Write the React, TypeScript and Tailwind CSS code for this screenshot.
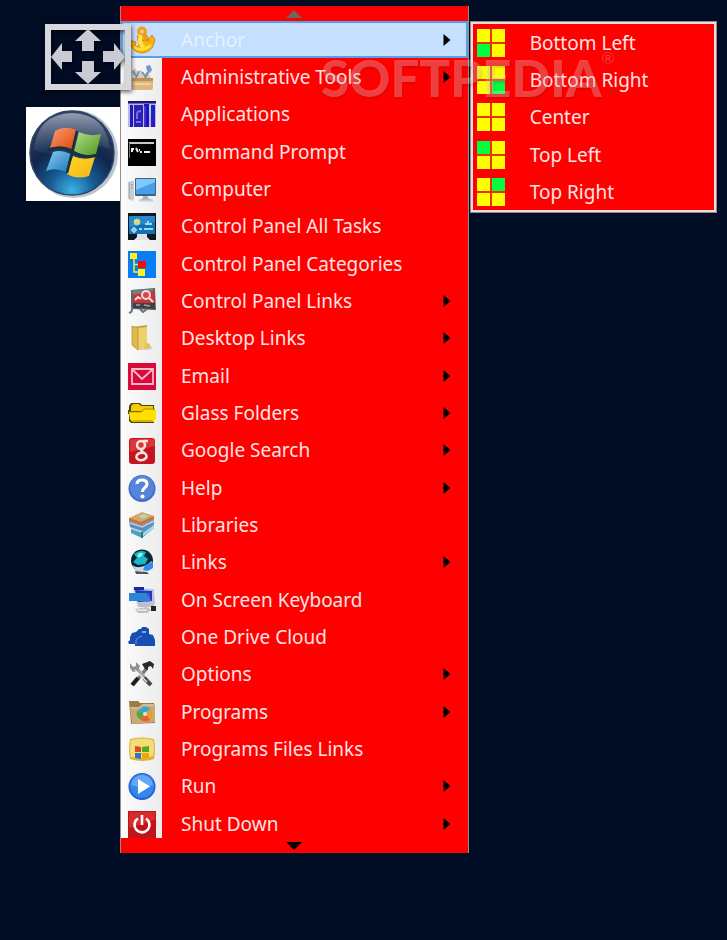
import React from "react";

const svgProps = {
  viewBox: "0 0 28 28",
  className: "h-7 w-7 shrink-0",
  "aria-hidden": true,
};

/* ── ICONS ─────────────────────────────────── */
const AnchorIcon = () => (
  <svg {...svgProps}>
    <path d="M10 13L18 12Q20 18 21 15L20 13L24 9L27 14L26 17Q24 26 14 27Q5 26 3 19L1 19V14L8 16L7 19Q9 22 11 20Z" fill="#fbb40a" stroke="#e08612" />
    <circle cx="14" cy="5.500" r="3.500" fill="#f6c9a0" stroke="#f0a018" strokeWidth="3" />
    <path d="M9 10L19 9L20 14L10 15Z" fill="#ff9d12" stroke="#cf7412" strokeWidth=".6" />
    <path d="M13 9Q10 17 16 22" stroke="#ffe44a" strokeWidth="4" fill="none" />
    <path d="M6 21Q14 27 23 19" stroke="#ffe03a" strokeWidth="2.500" fill="none" />
  </svg>
);

const AdminIcon = () => (
  <svg {...svgProps}>
    <path d="M3 9L7 5L10 9L13 7L17 11L20 8L23 15H5Z" fill="#c8cdd0" />
    <path d="M5 8L9 14M11 8L8 15M14 9L18 14" stroke="#7c858b" strokeWidth="1.500" />
    <path d="M18 3L22 2L24 7L22 10L19 8Z" fill="#6c9ad0" />
    <path d="M20 9L17 15" stroke="#7a8ca0" strokeWidth="2" />
    <path d="M4 15H25V25Q25 27 23 27H4Z" fill="#dfb67e" />
    <path d="M4 15H25V18H4Z" fill="#c08d54" />
    <path d="M6 21H23" stroke="#f0d1a0" strokeWidth="2" />
  </svg>
);

const ApplicationsIcon = () => (
  <svg {...svgProps}>
    <rect y="1" width="28" height="26" fill="#b8b8ee" />
    <rect y="1" width="28" height="2.500" fill="#1a1478" />
    <rect x="2" y="5" width="3" height="22" fill="#2418b8" />
    <rect x="6" y="5" width="9" height="22" fill="#2b22b4" />
    <rect x="16" y="4" width="5" height="23" fill="#2410c0" />
    <rect x="23" y="5" width="4" height="22" fill="#291cc0" />
    <path d="M9 19V14Q9 11 13 11M8 22H13" stroke="#7270e0" strokeWidth="2" fill="none" />
    <path d="M22 4V17" stroke="#8ae0d8" strokeWidth="2" />
    <path d="M17 6V26" stroke="#6354dc" />
  </svg>
);

const PromptIcon = () => (
  <svg {...svgProps}>
    <rect y="1" width="28" height="27" fill="#000" />
    <path d="M1 5H26" stroke="#c8c8c8" strokeWidth="2" />
    <path d="M1.500 5V20" stroke="#777" />
    <path d="M4 14V11H6M8 10L10 14M11 12H12M12 14H14M16 14H22" stroke="#eee" strokeWidth="2" fill="none" />
  </svg>
);

const ComputerIcon = () => (
  <svg {...svgProps}>
    <path d="M1 7L6 5V24L4 26L1 24Z" fill="#c9cdd0" />
    <path d="M1 7V24M3 10H5M3 13H5" stroke="#8d9499" fill="none" />
    <rect x="7" y="3" width="21" height="18" rx="1" fill="#3b6382" />
    <path d="M8 4H27V19H8Z" fill="#46a0e8" />
    <path d="M8 4H27V7L8 15Z" fill="#80c8fa" />
    <path d="M15 21H20V23L24 25H12L15 23Z" fill="#a8b2b8" />
    <path d="M11 25.500H25" stroke="#c8ced2" strokeWidth="2" />
  </svg>
);

const AllTasksIcon = () => (
  <svg {...svgProps}>
    <rect y="1" width="28" height="27" fill="#10181f" />
    <rect x="1" y="4" width="26" height="18" fill="#1270b8" />
    <path d="M1 4H27V10L1 15Z" fill="#2688cc" />
    <circle cx="9" cy="10" r="3" fill="#e9d47a" stroke="#b8d8b8" />
    <path d="M17 12H24M20 9V11M16 17H25M4 18L6 16L8 18L6 20ZM11 17H14" stroke="#9ed8f2" strokeWidth="2" fill="none" />
    <path d="M9 22H19V25L22 28H6L9 25Z" fill="#dfe3e5" />
  </svg>
);

const CategoriesIcon = () => (
  <svg {...svgProps}>
    <rect y="1" width="28" height="27" fill="#0a7df5" />
    <path d="M6 8V22H12M6 14.500H12" stroke="#f4f024" strokeWidth="1.500" fill="none" />
    <rect x="2" y="3" width="7" height="6" fill="#fff21a" />
    <rect x="10" y="11" width="8" height="7" fill="#e81010" />
    <rect x="10" y="19" width="7" height="7" fill="#fff21a" />
  </svg>
);

const PanelLinksIcon = () => (
  <svg {...svgProps}>
    <path d="M3 3L27 1L28 23L3 22Z" fill="#5d656b" />
    <path d="M5 7L26 4L27 16L5 16Z" fill="#d0303a" />
    <path d="M4 3L25 2V4L5 8Z" fill="#777c80" />
    <circle cx="18" cy="8" r="4" fill="#d84850" stroke="#f3dede" strokeWidth="2" />
    <path d="M7 13L10 10L13 12M21 11L25 15" stroke="#f4dcdc" strokeWidth="2" fill="none" />
    <path d="M5 16H27V22L5 21Z" fill="#3e4246" />
    <path d="M8 18H12M16 18L22 19" stroke="#9ea4a8" strokeWidth="1.500" />
    <path d="M4 20Q5 25 1 26M12 22L15 25L19 22" stroke="#6b7278" strokeWidth="2" fill="none" />
  </svg>
);

const FolderIcon = () => (
  <svg {...svgProps}>
    <path d="M17 20L25 23L22 26L9 26Z" fill="#b6c2c8" opacity=".6" />
    <path d="M5 3L19 1V23L10 26Z" fill="#c99f38" />
    <path d="M10 4L19 3V21L17 25L10 26Z" fill="#ecd06c" />
    <path d="M4 2L10 4V26L4 21Z" fill="#dfb94e" stroke="#b88c2c" strokeWidth=".7" />
    <path d="M17 18L22 20V24L16 25Z" fill="#e3c45c" />
  </svg>
);

const EmailIcon = () => (
  <svg {...svgProps}>
    <rect y="1" width="28" height="27" fill="#d80a3c" />
    <path d="M4 7H25V22H4ZM4 7L14 17L25 7" fill="none" stroke="#fbb8c6" strokeWidth="1.800" />
  </svg>
);

const GlassFoldersIcon = () => (
  <svg {...svgProps}>
    <path d="M1 7L3 4H12L14 6H26V24H3L1 22V15H0V11H1Z" fill="#4d4408" />
    <path d="M3 7L5 5H11L13 7H25V12H3Z" fill="#f3cb00" />
    <path d="M1 13H14L16 11H28V20L26 23H4L2 20Z" fill="#ffe100" />
    <path d="M1 13H13L16 10H27" stroke="#b89600" fill="none" />
    <path d="M4 22H25" stroke="#d9ae00" strokeWidth="2" />
  </svg>
);

const GoogleIcon = () => (
  <svg {...svgProps}>
    <rect x="1" y="2" width="26" height="26" rx="3" fill="#c51620" />
    <path d="M2 16L27 10V5Q27 3 24 3H4Q2 3 2 5Z" fill="#dc3438" />
    <ellipse cx="13" cy="9" rx="4" ry="4" stroke="#f8e4e4" strokeWidth="2.500" fill="none" />
    <path d="M15 5L20 5M14 13Q12 14 15 16Q20 19 18 22Q15 25 11 24Q7 22 9 19Q11 16 16 17" stroke="#f8e4e4" strokeWidth="2.500" fill="none" />
  </svg>
);

const HelpIcon = () => (
  <svg {...svgProps}>
    <circle cx="14" cy="14.500" r="13.500" fill="#3e6fc8" />
    <circle cx="14" cy="13.500" r="12" fill="#5585da" />
    <path d="M9 10Q9 6 14 6Q19 6 19 10Q19 12 16.500 14Q14.500 15.500 14.500 18" stroke="#fff" strokeWidth="3" fill="none" />
    <circle cx="14.500" cy="22.500" r="2" fill="#fff" />
  </svg>
);

const LibrariesIcon = () => (
  <svg {...svgProps}>
    <path d="M3 15L14 19L26 11V17L14 27L3 22Z" fill="#4f9fc8" />
    <path d="M3 15L14 19V22L3 18ZM14 23L26 14V17L14 26Z" fill="#a8dce8" />
    <path d="M1 10L14 14L26 8V12L14 20L2 16Z" fill="#6b86b4" />
    <path d="M2 12L14 16L26 10" stroke="#b8cfe5" strokeWidth="1.500" fill="none" />
    <path d="M1 7L14 1L26 5L25 9L13 14L1 10Z" fill="#dda065" />
    <path d="M1 7L13 11L26 5V8L14 14L1 10Z" fill="#b87840" />
    <path d="M10 5L16 3L21 5L15 8Z" fill="#a5dcb8" />
    <path d="M14 21V27" stroke="#347d64" strokeWidth="2" />
  </svg>
);

const LinksIcon = () => (
  <svg {...svgProps}>
    <path d="M7 23L19 24L21 26H8Z" fill="#555" />
    <circle cx="14" cy="12.500" r="11" fill="#0b2735" />
    <path d="M6 6Q12 1 18 4L16 8L20 11L17 16L10 17L5 14L9 10Z" fill="#16b9c4" />
    <path d="M11 5L15 5L13 9L9 9Z" fill="#9cf1ee" />
    <path d="M4 17Q12 23 24 13Q24 20 18 23Q9 26 4 17Z" fill="#cddbe8" />
    <path d="M17 17L25 14V20L20 23L15 22Z" fill="#2d8cf0" />
  </svg>
);

const KeyboardIcon = () => (
  <svg {...svgProps}>
    <path d="M5 2L26 3L27 18L9 18Z" fill="#b9c5e0" />
    <path d="M7 4L24 5V15L10 16Z" fill="#2437bf" />
    <path d="M6 1H16V4H6Z" fill="#1a2c9c" />
    <rect x="1" y="7" width="18" height="8" fill="#2d86d2" />
    <path d="M20 6L23 15L18 16Z" fill="#516fe0" />
    <path d="M9 17L26 18V21H10ZM7 23L19 21L23 24L19 27H10Z" fill="#bcc0c5" />
    <path d="M23 20H28V25H23Z" fill="#262626" />
    <path d="M9 24H19" stroke="#ececec" strokeWidth="1.500" />
  </svg>
);

const CloudIcon = () => (
  <svg {...svgProps}>
    <path d="M0 19L2 17V14L4 10L8 9L11 6H13L14 4H18L21 6V11L25 12L27 17V23H7V21H1Z" fill="#164eb4" />
    <path d="M8 21L8 17L11 14L14 13" stroke="#6f94d4" fill="none" />
    <path d="M14 9H18" stroke="#a9c0e8" strokeWidth="1.500" />
  </svg>
);

const OptionsIcon = () => (
  <svg {...svgProps}>
    <path d="M5 25L19 8" stroke="#777" strokeWidth="3.500" />
    <path d="M4 25L10 18" stroke="#1e1e1e" strokeWidth="4" />
    <path d="M14 4L22 1L26 4L25 9L23 6L20 7L20 10L17 9Z" fill="#282828" />
    <path d="M7 7L22 24" stroke="#a6a6a6" strokeWidth="4" />
    <path d="M16 18L23 25" stroke="#4a4a4a" strokeWidth="4" />
    <path d="M2 3L5 7L8 6L8 2L12 6L10 11L5 12L2 8Z" fill="#909090" />
    <path d="M7 10L19 22" stroke="#eee" strokeWidth="1.300" />
  </svg>
);

const ProgramsIcon = () => (
  <svg {...svgProps}>
    <path d="M1 3H10L12 5H26L27 25L3 26Z" fill="#9b7b4a" />
    <path d="M2 9L11 9L14 6H27V24L4 26Z" fill="#c9aa76" />
    <path d="M3 10H12L15 7H26" stroke="#e4cda2" fill="none" />
    <path d="M10 13Q16 5 23 11L17 15Z" fill="#35a5dc" />
    <path d="M23 11Q26 17 22 22L17 15Z" fill="#e9a020" />
    <path d="M9 13L17 15L13 22Q7 19 9 13Z" fill="#51a84a" />
    <path d="M17 15L22 22Q17 25 13 22Z" fill="#e9602c" />
    <circle cx="17" cy="16" r="2" fill="#e3e9d8" />
  </svg>
);

const ProgramFilesIcon = () => (
  <svg {...svgProps}>
    <path d="M2 4Q14 1 26 4Q28 14 26 24Q14 28 2 24Q0 14 2 4Z" fill="#d9b43a" />
    <path d="M3 5Q14 2 25 5Q27 13 25 21Q14 25 3 22Q1 14 3 5Z" fill="#f5dc74" />
    <path d="M7 11L13 12V17H7Z" fill="#df4822" />
    <path d="M14 12L21 11V17H14Z" fill="#4aac20" />
    <path d="M7 18H13V24L7 23Z" fill="#2777cf" />
    <path d="M14 18H21V23L14 24Z" fill="#f5a800" />
  </svg>
);

const RunIcon = () => (
  <svg {...svgProps}>
    <circle cx="14" cy="14.500" r="13.500" fill="#1f60d0" />
    <circle cx="14" cy="14" r="12" fill="#3388ee" />
    <path d="M3 13Q5 3 14 3Q23 3 25 13Q14 17 3 13Z" fill="#62a8f6" />
    <path d="M10 7L22 14.500L10 22Z" fill="#fff" />
  </svg>
);

const PowerIcon = () => (
  <svg {...svgProps}>
    <rect x="0" y="1" width="28" height="27" fill="#c11418" />
    <path d="M1 2H27V10L1 18Z" fill="#d52b2d" />
    <path d="M10 8.500A7.500 7.500 0 1 0 18 8.500M14 5V15" stroke="#fff" strokeWidth="2.600" fill="none" />
  </svg>
);

/* four squares, the green one marks the screen corner */
const CornerIcon = ({ active }: { active: number }) => (
  <svg {...svgProps}>
    <rect width="28" height="28" fill="#f03000" />
    {[0, 1, 2, 3].map((i) => (
      <rect
        key={i}
        x={i % 2 ? 15 : 0}
        y={i > 1 ? 15 : 0}
        width="13"
        height="13"
        fill={i === active ? "#00ff40" : "#ffff00"}
      />
    ))}
  </svg>
);

const Orb = () => (
  <svg viewBox="0 0 94 94" className="block w-full bg-white" aria-hidden="true">
    <defs>
      <radialGradient id="orb" cx="50%" cy="95%" r="90%">
        <stop offset="0" stopColor="#3cb4e8" />
        <stop offset=".3" stopColor="#175a94" />
        <stop offset=".6" stopColor="#10264c" />
        <stop offset="1" stopColor="#39435f" />
      </radialGradient>
      <linearGradient id="gloss" x1="0" y1="0" x2="0" y2="1">
        <stop offset="0" stopColor="#c6cddb" stopOpacity=".65" />
        <stop offset="1" stopColor="#6680a8" stopOpacity=".1" />
      </linearGradient>
      <linearGradient id="flagRed" x1="0" y1="0" x2="1" y2="1">
        <stop offset="0" stopColor="#f5a070" />
        <stop offset="1" stopColor="#e4440c" />
      </linearGradient>
      <linearGradient id="flagGreen" x1="0" y1="0" x2="1" y2="1">
        <stop offset="0" stopColor="#b5dc8e" />
        <stop offset="1" stopColor="#4c9a1a" />
      </linearGradient>
      <linearGradient id="flagBlue" x1="0" y1="0" x2="1" y2="1">
        <stop offset="0" stopColor="#8ccdf0" />
        <stop offset="1" stopColor="#1878bd" />
      </linearGradient>
      <linearGradient id="flagYellow" x1="0" y1="0" x2="1" y2="1">
        <stop offset="0" stopColor="#ffd820" />
        <stop offset="1" stopColor="#f4b51c" />
      </linearGradient>
    </defs>
    <circle cx="48" cy="47" r="44" fill="#8498ac" opacity=".55" />
    <circle cx="46" cy="46" r="42" fill="url(#orb)" stroke="#2d4566" strokeWidth="1.500" />
    <path d="M8 42Q12 7 46 6Q80 7 84 42Q65 34 46 43Q27 52 8 42Z" fill="url(#gloss)" />
    <path d="M29 24Q39 18 50 23L46 42Q36 37 24 41Z" fill="url(#flagRed)" />
    <path d="M53 25Q63 30 75 27L70 47Q59 50 48 44Z" fill="url(#flagGreen)" />
    <path d="M27 45Q34 42 45 47L40 65Q30 60 20 64Z" fill="url(#flagBlue)" />
    <path d="M47 49Q58 54 69 50L63 69Q51 73 41 67Z" fill="url(#flagYellow)" />
    <path d="M22 43Q35 38 47 45Q59 52 71 48M51 24L41 66" stroke="#1b3037" strokeWidth="2.500" fill="none" />
  </svg>
);

const MoveHandle = () => (
  <svg viewBox="0 0 88 68" className="h-[68px] w-[88px] drop-shadow-[1px_2px_2px_rgba(0,0,0,0.6)]" aria-hidden="true">
    <rect x="3" y="3" width="80" height="60" fill="none" stroke="#d6d6dd" strokeWidth="6" />
    <g fill="#cacad2">
      <path d="M43 5L56 17H49V27H37V17H30Z" />
      <path d="M43 60L30 48H37V37H49V48H56Z" />
      <path d="M6 33L17 19V27H27V38H17V46Z" />
      <path d="M80 33L69 46V38H58V27H69V19Z" />
    </g>
  </svg>
);

const Arrow = () => (
  <svg viewBox="0 0 7 12" className="h-3 w-2 shrink-0 text-black" aria-hidden="true">
    <path d="M0 0L7 6L0 12Z" fill="currentColor" />
  </svg>
);

type Item = { label: string; icon: React.ReactNode; sub?: boolean };

const items: Item[] = [
  { label: "Anchor", icon: <AnchorIcon />, sub: true },
  { label: "Administrative Tools", icon: <AdminIcon />, sub: true },
  { label: "Applications", icon: <ApplicationsIcon /> },
  { label: "Command Prompt", icon: <PromptIcon /> },
  { label: "Computer", icon: <ComputerIcon /> },
  { label: "Control Panel All Tasks", icon: <AllTasksIcon /> },
  { label: "Control Panel Categories", icon: <CategoriesIcon /> },
  { label: "Control Panel Links", icon: <PanelLinksIcon />, sub: true },
  { label: "Desktop Links", icon: <FolderIcon />, sub: true },
  { label: "Email", icon: <EmailIcon />, sub: true },
  { label: "Glass Folders", icon: <GlassFoldersIcon />, sub: true },
  { label: "Google Search", icon: <GoogleIcon />, sub: true },
  { label: "Help", icon: <HelpIcon />, sub: true },
  { label: "Libraries", icon: <LibrariesIcon /> },
  { label: "Links", icon: <LinksIcon />, sub: true },
  { label: "On Screen Keyboard", icon: <KeyboardIcon /> },
  { label: "One Drive Cloud", icon: <CloudIcon /> },
  { label: "Options", icon: <OptionsIcon />, sub: true },
  { label: "Programs", icon: <ProgramsIcon />, sub: true },
  { label: "Programs Files Links", icon: <ProgramFilesIcon /> },
  { label: "Run", icon: <RunIcon />, sub: true },
  { label: "Shut Down", icon: <PowerIcon />, sub: true },
];

const corners = [
  { label: "Bottom Left", active: 2 },
  { label: "Bottom Right", active: 3 },
  { label: "Center", active: -1 },
  { label: "Top Left", active: 0 },
  { label: "Top Right", active: 1 },
];

const App: React.FC = () => {
  return (
    <main className="relative flex min-h-screen items-start bg-[#000c24] pt-[6px] pr-[10px] pb-20 pl-[26px] font-['Noto_Sans','Open_Sans',sans-serif] text-[19px] text-[#ffe4e4]">
      {/* ── START ORB ─────────────────────────────── */}
      <button aria-label="Start" className="mt-[101px] w-[94px] shrink-0">
        <Orb />
      </button>

      {/* ── MAIN MENU ─────────────────────────────── */}
      <nav className="flex-[349] border-x border-[#9a8c8c] bg-[#ff0000]">
        <button aria-label="Scroll up" className="flex h-[15px] w-full items-center justify-center">
          <svg viewBox="0 0 16 8" className="h-2 w-4" aria-hidden="true">
            <path d="M0 8L8 0L16 8Z" fill="#6e6666" />
          </svg>
        </button>
        <ul>
          {items.map((item, i) => (
            <li key={item.label} className="h-[37px] nth-[3n]:h-[38px]">
              <button
                className={
                  i === 0
                    ? "flex h-full w-full items-center bg-[#c4dfff] text-left text-[#e6f1ff] inset-ring-2 inset-ring-[#5a9fe6]"
                    : "flex h-full w-full items-center text-left"
                }
              >
                <span
                  className={
                    i === 0
                      ? "flex h-full w-[41px] shrink-0 items-center pl-[7px]"
                      : "flex h-full w-[41px] shrink-0 items-center bg-linear-to-r from-[#fcfcfc] to-[#ececec] pl-[7px]"
                  }
                >
                  {item.icon}
                </span>
                <span className="flex-1 pt-px pl-[19px] whitespace-nowrap">{item.label}</span>
                {item.sub && <span className="pr-[17px]"><Arrow /></span>}
              </button>
            </li>
          ))}
        </ul>
        <button aria-label="Scroll down" className="relative -mt-1 flex h-[15px] w-full items-center justify-center bg-[#ff0000]">
          <svg viewBox="0 0 16 8" className="h-2 w-4" aria-hidden="true">
            <path d="M0 0H16L8 8Z" fill="#000" />
          </svg>
        </button>
      </nav>

      {/* ── ANCHOR SUBMENU ────────────────────────── */}
      <nav className="mt-[15px] ml-px flex-[247] border border-[#8c8c8c] bg-[#ff0000]">
        <ul className="border-2 border-[#f2dcdc]">
          {corners.map((corner) => (
            <li key={corner.label} className="h-[37px] nth-[3n]:h-[38px]">
              <button className="flex h-full w-full items-center pl-1 text-left">
                <CornerIcon active={corner.active} />
                <span className="pt-px pl-[25px] whitespace-nowrap">{corner.label}</span>
              </button>
            </li>
          ))}
        </ul>
      </nav>

      {/* ── OVERLAYS ──────────────────────────────── */}
      <div className="pointer-events-none absolute top-[42px] left-[321px] flex items-start font-['Lato',sans-serif] text-[51px] leading-[72px] font-black text-white/25 text-shadow-[1px_2px_2px_rgba(80,0,0,0.15)]">
        SOFTPEDIA
        <span className="text-base leading-8 font-normal">®</span>
      </div>
      <button aria-label="Move" className="absolute top-6 left-[45px]">
        <MoveHandle />
      </button>
    </main>
  );
};

export default App;
